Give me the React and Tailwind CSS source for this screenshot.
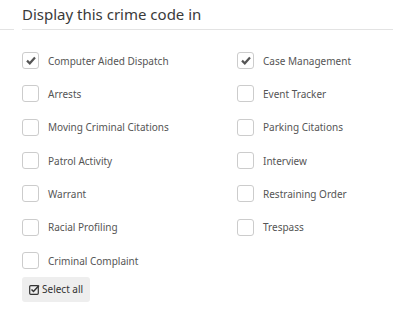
import React from "react";

const left = [
  ["Computer Aided Dispatch", true],
  ["Arrests", false],
  ["Moving Criminal Citations", false],
  ["Patrol Activity", false],
  ["Warrant", false],
  ["Racial Profiling", false],
  ["Criminal Complaint", false],
];
const right = [
  ["Case Management", true],
  ["Event Tracker", false],
  ["Parking Citations", false],
  ["Interview", false],
  ["Restraining Order", false],
  ["Trespass", false],
];

function Check() {
  return (
    <svg width="10" height="9" viewBox="0 0 10 9">
      <path d="M1 4.6 L3.8 7.3 L9 1.6" fill="none" stroke="#555" strokeWidth="2.2" />
    </svg>
  );
}

function Item({ label, checked }) {
  return (
    <div className="flex items-center h-[33.33px]">
      <div className="w-[17px] h-[17px] border border-[#ccc] rounded-[3px] bg-white flex items-center justify-center shrink-0">
        {checked && <Check />}
      </div>
      <span className="ml-[9px] text-[10px] text-[#555] leading-none">{label}</span>
    </div>
  );
}

export default function App() {
  return (
    <div className="w-[393px] h-[309px] bg-white" style={{ fontFamily: '"Noto Sans", sans-serif' }}>
      <div className="flex items-end h-[30px]">
        <div className="w-[14px] border-b border-[#e3e3e3]" />
        <div className="ml-[8px] flex-1 border-b border-[#e3e3e3] pb-[3px]">
          <span className="text-[15px] text-[#3a3a3a] leading-none">Display this crime code in</span>
        </div>
      </div>
      <div className="pl-[22px] pt-[14px] flex">
        <div className="w-[215px]">
          {left.map(([l, c]) => (
            <Item key={l} label={l} checked={c} />
          ))}
        </div>
        <div>
          {right.map(([l, c]) => (
            <Item key={l} label={l} checked={c} />
          ))}
        </div>
      </div>
      <div className="pl-[22px]">
        <button className="h-[25px] px-[7px] bg-[#eee] rounded-[3px] flex items-center text-[10px] text-[#333]">
          <svg width="11" height="11" viewBox="0 0 11 11" className="mr-[2px]">
            <rect x="0.7" y="1.7" width="8.6" height="8.6" rx="1" fill="none" stroke="#333" strokeWidth="1.2" />
            <path d="M2.5 5.5 L4.5 7.5 L10 1.5" fill="none" stroke="#333" strokeWidth="1.5" />
          </svg>
          Select all
        </button>
      </div>
    </div>
  );
}
